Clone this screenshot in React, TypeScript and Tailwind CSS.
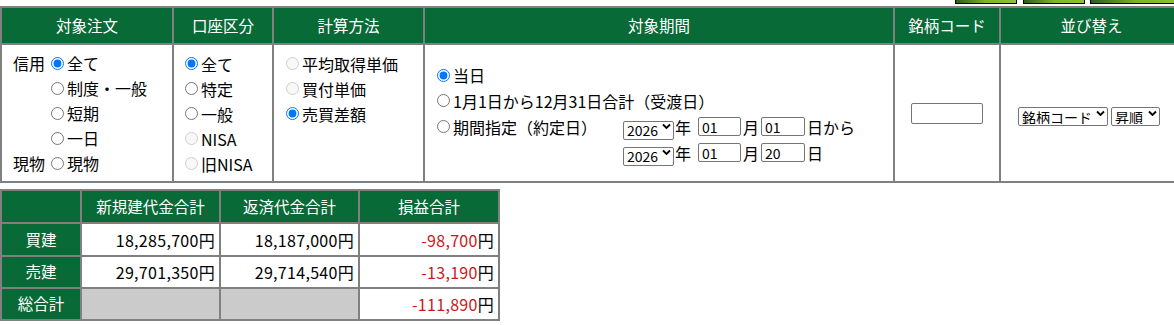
import React from "react";

const font = { fontFamily: '"Noto Sans CJK JP", "Noto Sans", sans-serif' };

function Radio({ checked = false, disabled = false }: { checked?: boolean; disabled?: boolean }) {
  return (
    <input
      type="radio"
      defaultChecked={checked}
      disabled={disabled}
      className="m-0 mr-[3px] h-[13px] w-[13px] shrink-0 align-middle"
    />
  );
}

function Line({ children, className = "" }: { children: React.ReactNode; className?: string }) {
  return <div className={"flex h-[25px] items-center whitespace-nowrap " + className}>{children}</div>;
}

function Sel({ value, w }: { value: string; w: string }) {
  return (
    <div className={"relative h-[19px] shrink-0 " + w}>
      <select
        defaultValue={value}
        className="h-full w-full appearance-none border border-[#767676] rounded-[2px] bg-white pl-[3px] pr-[14px] text-[14px] leading-none text-black"
      >
        <option value={value}>{value}</option>
      </select>
      <svg
        className="pointer-events-none absolute right-[3px] top-[6px] h-[7px] w-[9px]"
        viewBox="0 0 9 7"
        fill="none"
      >
        <path d="M1 1.5 L4.5 5 L8 1.5" stroke="#000" strokeWidth="1.8" />
      </svg>
    </div>
  );
}

function TxtIn({ value, w }: { value: string; w: string }) {
  return (
    <input
      type="text"
      defaultValue={value}
      className={"h-[19px] shrink-0 border border-[#767676] rounded-[2px] bg-white px-[3px] text-[14px] leading-none " + w}
    />
  );
}

export default function App() {
  const th = "border-2 border-[#808080] bg-[#086a36] text-white font-normal text-center h-[37px] p-0 text-[15.5px]";
  const td = "border-2 border-[#808080] bg-white p-0";
  const bth = "border-2 border-[#808080] bg-[#086a36] text-white font-normal text-center p-0 text-[15.5px]";
  const num = "border-2 border-[#808080] bg-white text-right pr-[4px] p-0 tracking-[0.3px]";
  return (
    <div className="w-[1174px] h-[325px] overflow-hidden bg-white text-[16px] text-black" style={font}>
      <div className="flex h-[4px] items-end justify-end overflow-hidden">
        <div className="mr-[6px] h-[30px] w-[62px] shrink-0 border border-black bg-gradient-to-r from-[#2b5e1e] via-[#7fb52a] to-[#8cc234]" />
        <div className="mr-[5px] h-[30px] w-[62px] shrink-0 border border-black bg-gradient-to-r from-[#2b5e1e] via-[#7fb52a] to-[#8cc234]" />
        <div className="mr-[-10px] h-[30px] w-[94px] shrink-0 border border-black bg-gradient-to-r from-[#2b5e1e] via-[#7fb52a] to-[#8cc234]" />
      </div>
      <table className="mt-[2px] w-[1182px] table-fixed border-collapse">
        <colgroup>
          <col className="w-[172px]" />
          <col className="w-[100px]" />
          <col className="w-[151px]" />
          <col className="w-[470px]" />
          <col className="w-[106px]" />
          <col className="w-[183px]" />
        </colgroup>
        <thead>
          <tr>
            <th className={th}>対象注文</th>
            <th className={th}>口座区分</th>
            <th className={th}>計算方法</th>
            <th className={th}>対象期間</th>
            <th className={th}>銘柄コード</th>
            <th className={th}>並び替え</th>
          </tr>
        </thead>
        <tbody>
          <tr className="h-[138px]">
            <td className={td + " align-middle"}>
              <div className="grid grid-cols-[38px_1fr] pl-[11px]">
                <div className="flex h-[25px] items-center">信用</div>
                <Line><Radio checked />全て</Line>
                <div />
                <Line><Radio />制度・一般</Line>
                <div />
                <Line><Radio />短期</Line>
                <div />
                <Line><Radio />一日</Line>
                <div className="flex h-[25px] items-center">現物</div>
                <Line><Radio />現物</Line>
              </div>
            </td>
            <td className={td + " align-middle"}>
              <div className="pl-[11px] pt-[1px]">
                <Line><Radio checked />全て</Line>
                <Line><Radio />特定</Line>
                <Line><Radio />一般</Line>
                <Line><Radio disabled />NISA</Line>
                <Line><Radio disabled />旧NISA</Line>
              </div>
            </td>
            <td className={td + " align-top"}>
              <div className="pl-[12px] pt-[6px]">
                <Line><Radio disabled />平均取得単価</Line>
                <Line><Radio disabled />買付単価</Line>
                <Line><Radio checked />売買差額</Line>
              </div>
            </td>
            <td className={td + " align-middle"}>
              <div className="pl-[12px] pt-[2px]">
                <Line><Radio checked />当日</Line>
                <Line className="h-[26px]"><Radio />1月1日から12月31日合計（受渡日）</Line>
                <div className="flex h-[26px] items-center whitespace-nowrap">
                  <div className="flex w-[186px] items-center"><Radio />期間指定（約定日）</div>
                  <Sel value="2026" w="w-[51px]" />
                  <span className="ml-[1px] mr-[7px]">年</span>
                  <TxtIn value="01" w="w-[43px]" />
                  <span className="ml-[2px] mr-[2px]">月</span>
                  <TxtIn value="01" w="w-[44px]" />
                  <span className="ml-[2px]">日から</span>
                </div>
                <div className="flex h-[26px] items-center whitespace-nowrap">
                  <div className="w-[186px]" />
                  <Sel value="2026" w="w-[51px]" />
                  <span className="ml-[1px] mr-[7px]">年</span>
                  <TxtIn value="01" w="w-[43px]" />
                  <span className="ml-[2px] mr-[2px]">月</span>
                  <TxtIn value="20" w="w-[44px]" />
                  <span className="ml-[2px]">日</span>
                </div>
              </div>
            </td>
            <td className={td + " align-middle text-center"}>
              <div className="flex justify-center">
                <input type="text" className="h-[21px] w-[72px] border border-[#767676] rounded-[2px] bg-white" />
              </div>
            </td>
            <td className={td + " align-middle"}>
              <div className="flex items-center gap-[3px] pl-[17px]">
                <Sel value="銘柄コード" w="w-[90px]" />
                <Sel value="昇順" w="w-[49px]" />
              </div>
            </td>
          </tr>
        </tbody>
      </table>
      <table className="mt-[6px] w-[498px] table-fixed border-collapse">
        <colgroup>
          <col className="w-[80px]" />
          <col className="w-[139px]" />
          <col className="w-[139px]" />
          <col className="w-[140px]" />
        </colgroup>
        <tbody>
          <tr className="h-[33px]">
            <th className={bth}></th>
            <th className={bth}>新規建代金合計</th>
            <th className={bth}>返済代金合計</th>
            <th className={bth}>損益合計</th>
          </tr>
          <tr className="h-[33px]">
            <th className={bth}>買建</th>
            <td className={num}>18,285,700円</td>
            <td className={num}>18,187,000円</td>
            <td className={num}><span className="text-[#c8191e]">-98,700</span>円</td>
          </tr>
          <tr className="h-[32px]">
            <th className={bth}>売建</th>
            <td className={num}>29,701,350円</td>
            <td className={num}>29,714,540円</td>
            <td className={num}><span className="text-[#c8191e]">-13,190</span>円</td>
          </tr>
          <tr className="h-[32px]">
            <th className={bth}>総合計</th>
            <td className="border-2 border-[#808080] bg-[#cbcbcb] p-0"></td>
            <td className="border-2 border-[#808080] bg-[#cbcbcb] p-0"></td>
            <td className={num}><span className="text-[#c8191e]">-111,890</span>円</td>
          </tr>
        </tbody>
      </table>
    </div>
  );
}
